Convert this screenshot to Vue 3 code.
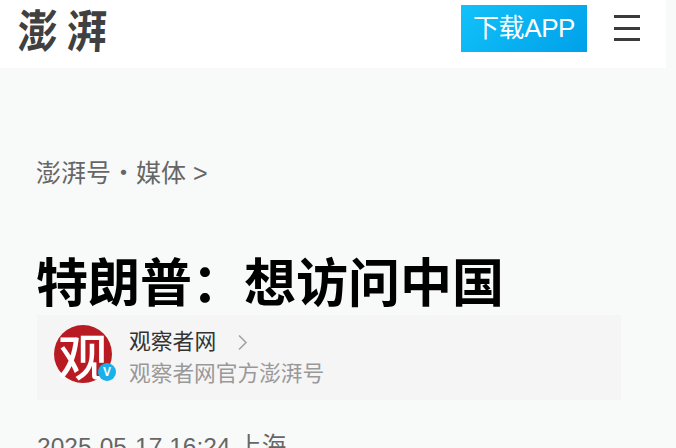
<script setup>
const title = '特朗普\uff1a想访问中国'
</script>

<template>
  <div class="page">
    <header class="top">
      <div class="logo"><span>澎</span><span>湃</span></div>
      <div class="top-right">
        <div class="download">下载APP</div>
        <div class="menu"><i></i><i></i><i></i></div>
      </div>
    </header>
    <main class="content">
      <div class="crumb">澎湃号・媒体 <span class="gt">&gt;</span></div>
      <h1 class="title">{{ title }}</h1>
      <div class="author">
        <div class="avatar">
          <div class="disc">观</div>
          <div class="badge">V</div>
        </div>
        <div class="meta">
          <div class="name">观察者网
            <svg class="chev" width="11" height="17" viewBox="0 0 11 17"><path d="M2 1.5 9 8.5 2 15.5" fill="none" stroke="#a3a3a3" stroke-width="1.6"/></svg>
          </div>
          <div class="desc">观察者网官方澎湃号</div>
        </div>
      </div>
      <div class="date">2025-05-17 16:24 上海</div>
    </main>
  </div>
</template>

<style>
html, body { margin: 0; background: #f8f9f9; overflow: hidden; }
</style>

<style scoped>
.page {
  width: 676px;
  height: 448px;
  overflow: hidden;
  background: #f8f9f9;
  font-family: "Liberation Sans", "Noto Sans CJK SC", sans-serif;
}
.top {
  width: 666px;
  height: 68px;
  background: #fff;
  display: flex;
  justify-content: space-between;
  box-sizing: border-box;
  padding: 0 26px 0 18px;
}
.logo {
  display: flex;
  gap: 9px;
  height: 56px;
  align-items: center;
  font-family: "Noto Sans CJK SC", sans-serif;
  font-weight: 700;
  font-size: 40px;
  line-height: 48px;
  color: #404040;
}
.logo span { display: block; transform: scaleY(1.15) skewX(-3deg); }
.top-right { display: flex; gap: 27px; align-items: flex-start; }
.download {
  margin-top: 5px;
  width: 126px;
  height: 47px;
  line-height: 47px;
  text-align: center;
  font-size: 26px;
  letter-spacing: -0.4px;
  color: #fff;
  background: linear-gradient(135deg, #12c2f9, #00a0e9);
}
.menu {
  width: 26px;
  margin-top: 15px;
  height: 26px;
  display: flex;
  flex-direction: column;
  justify-content: space-between;
}
.menu i { display: block; height: 3px; background: #3a3a3a; }
.content { padding: 89px 0 0 37px; }
.crumb { font-size: 25px; line-height: 32px; color: #666; margin-left: -1px; }
.gt { font-size: 25px; }
.title {
  margin: 60px 0 0 -1px;
  font-size: 52px;
  line-height: 62px;
  font-weight: 700;
  color: #000;
  font-family: "Noto Sans CJK SC", sans-serif;
}
.author {
  width: 584px;
  height: 85px;
  margin-top: 4px;
  background: #f5f5f5;
  box-sizing: border-box;
  padding: 10px 17px;
  display: flex;
  gap: 17px;
}
.avatar { position: relative; width: 58px; height: 58px; }
.disc {
  width: 58px;
  height: 58px;
  border-radius: 50%;
  background: #b81c22;
  color: #fff;
  font-family: "Noto Sans CJK SC", sans-serif;
  font-size: 50px;
  font-weight: 500;
  line-height: 58px;
  text-align: center;
}
.badge {
  position: absolute;
  right: -4px;
  bottom: 2px;
  width: 18px;
  height: 18px;
  border-radius: 50%;
  background: #1ab0ea;
  color: #fff;
  font-size: 12px;
  font-weight: 700;
  line-height: 18px;
  text-align: center;
}
.meta { padding-top: 1px; }
.name {
  font-size: 21.8px;
  line-height: 32px;
  color: #333;
  display: flex;
  align-items: center;
  gap: 21px;
}
.desc { font-size: 21.7px; line-height: 31px; color: #999; }
.date { margin-top: 32px; font-size: 24.5px; line-height: 30px; color: #666; }
</style>
